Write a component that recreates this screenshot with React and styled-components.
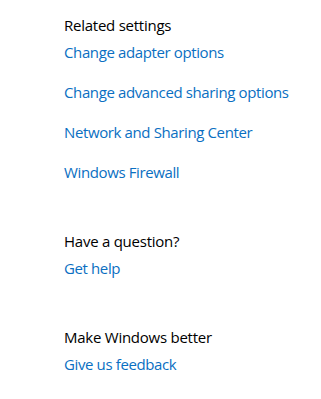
import React from "react";
import styled, { createGlobalStyle } from "styled-components";

const Global = createGlobalStyle`
  html, body { margin: 0; padding: 0; background: #ffffff; }
  body { font-family: "Open Sans", "Noto Sans", "Liberation Sans", sans-serif; }
`;

const Page = styled.div`
  display: flex;
  flex-direction: column;
  gap: 49px;
  padding: 15px 0 0 64px;
  width: 321px;
  height: 399px;
  box-sizing: border-box;
`;

const Section = styled.section`
  display: flex;
  flex-direction: column;
  gap: 7px;
`;

const Heading = styled.div`
  font-size: 15px;
  line-height: 20px;
  color: #000000;
  letter-spacing: -0.25px;
`;

const Links = styled.div`
  display: flex;
  flex-direction: column;
  gap: 20px;
`;

const Link = styled.a`
  font-size: 15px;
  line-height: 20px;
  color: #0a6fc2;
  text-decoration: none;
  letter-spacing: -0.38px;
  cursor: pointer;
`;

const sections = [
  {
    title: "Related settings",
    links: [
      "Change adapter options",
      "Change advanced sharing options",
      "Network and Sharing Center",
      "Windows Firewall",
    ],
  },
  { title: "Have a question?", links: ["Get help"] },
  { title: "Make Windows better", links: ["Give us feedback"] },
];

export default function App() {
  return (
    <>
      <Global />
      <Page>
        {sections.map((s) => (
          <Section key={s.title}>
            <Heading>{s.title}</Heading>
            <Links>
              {s.links.map((l) => (
                <Link key={l}>{l}</Link>
              ))}
            </Links>
          </Section>
        ))}
      </Page>
    </>
  );
}
